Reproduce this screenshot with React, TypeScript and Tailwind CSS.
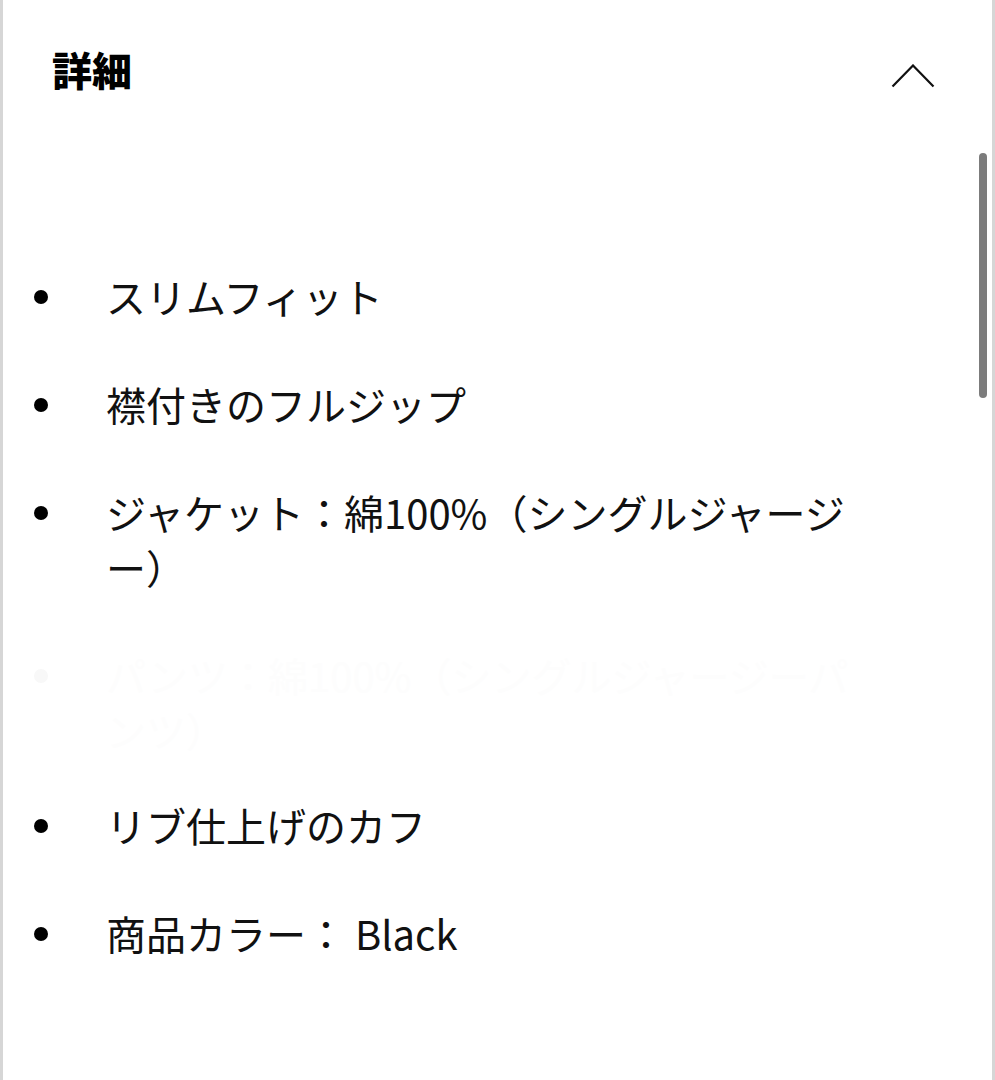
const items = [
  { text: "スリムフィット" },
  { text: "襟付きのフルジップ" },
  { text: "ジャケット：綿100%（シングルジャージー）" },
  { text: "パンツ：綿100%（シングルジャージーパンツ）", faint: true },
  { text: "リブ仕上げのカフ" },
  { text: "商品カラー： Black" },
];

export default function App() {
  return (
    <div
      className="relative w-[995px] h-[1080px] overflow-hidden bg-white border-l-[3px] border-r-[3px] border-[#d6d6d6] text-black"
      style={{ fontFamily: '"Noto Sans CJK JP", "Noto Sans", sans-serif' }}
    >
      {/* header */}
      <div className="flex items-center justify-between pl-[49px] pr-[57px] pt-[44px]">
        <h2 className="text-[40px] leading-[50px] font-black">詳細</h2>
        <svg width="44" height="24" viewBox="0 0 44 24" fill="none" className="mt-[14px]">
          <polyline points="1.5,22.5 22,1.5 42.5,22.5" stroke="#111" strokeWidth="2.2" />
        </svg>
      </div>

      {/* list */}
      <ul className="mt-[175px] pl-[31px] flex flex-col gap-[53px]">
        {items.map((item) => (
          <li
            key={item.text}
            className={`flex items-start text-[40px] leading-[55px] ${
              item.faint ? "text-[#fdfdfd] -mb-[13px]" : "text-[#111]"
            }`}
          >
            <span className="w-[72px] h-[55px] shrink-0 flex items-center">
              <span
                className={`w-[14px] h-[14px] rounded-full ${
                  item.faint ? "bg-[#f8f8f8]" : "bg-black"
                }`}
              />
            </span>
            <span className="w-[760px]">{item.text}</span>
          </li>
        ))}
      </ul>

      {/* scrollbar */}
      <div className="absolute right-[5px] top-[153px] w-[8px] h-[245px] rounded-full bg-[#7c7c7c]" />
    </div>
  );
}
